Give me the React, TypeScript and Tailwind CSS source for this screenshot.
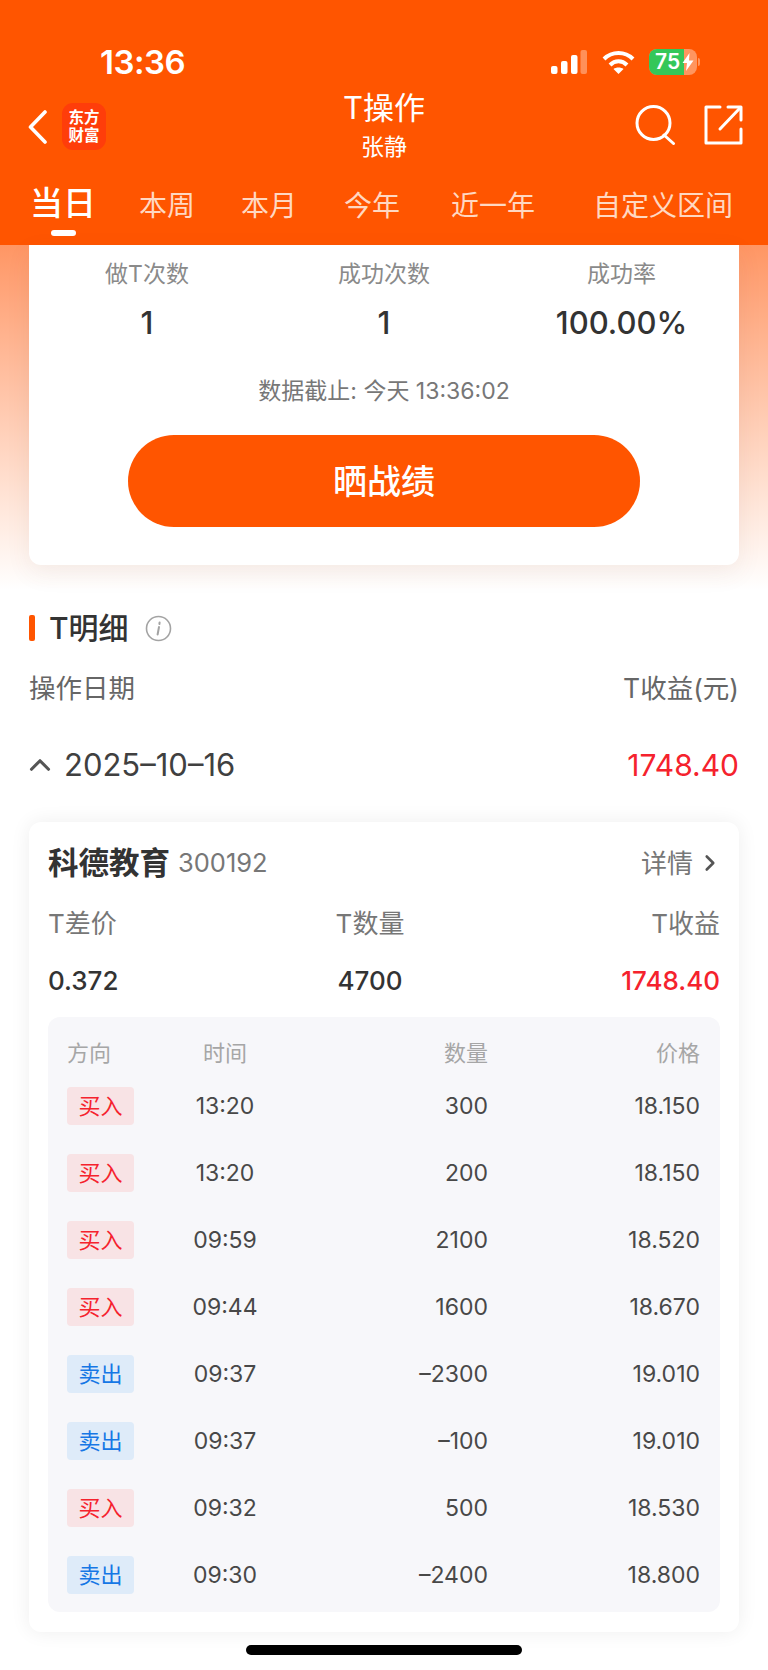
import { ChevronRight, ChevronUp } from 'lucide-react'

const tabs = [
  { label: '本周', className: 'ml-[43px]' },
  { label: '本月', className: 'ml-[46px]' },
  { label: '今年', className: 'ml-[47px]' },
  { label: '近一年', className: 'ml-[51px]' },
  { label: '自定义区间', className: 'ml-[58px]' },
]

const stats = [
  { label: '做T次数', value: '1' },
  { label: '成功次数', value: '1' },
  { label: '成功率', value: '100.00%' },
]

const trades = [
  { side: 'buy', time: '13:20', qty: '300', price: '18.150' },
  { side: 'buy', time: '13:20', qty: '200', price: '18.150' },
  { side: 'buy', time: '09:59', qty: '2100', price: '18.520' },
  { side: 'buy', time: '09:44', qty: '1600', price: '18.670' },
  { side: 'sell', time: '09:37', qty: '-2300', price: '19.010' },
  { side: 'sell', time: '09:37', qty: '-100', price: '19.010' },
  { side: 'buy', time: '09:32', qty: '500', price: '18.530' },
  { side: 'sell', time: '09:30', qty: '-2400', price: '18.800' },
]

function StatusBar() {
  return (
    <div className="flex h-[86px] items-start pl-[100px] pt-[44px] pr-[68px] text-white">
      <span className="text-[33px] leading-[36px] font-semibold tracking-[-0.5px]">13:36</span>
      <div className="ml-auto flex items-center pt-[5px]">
        <svg width="36" height="25" viewBox="0 0 36 25" fill="white">
          <rect x="0" y="16" width="6.5" height="8" rx="2" />
          <rect x="10" y="11" width="6.5" height="13" rx="2" />
          <rect x="20" y="5" width="6.5" height="19" rx="2" />
          <rect x="29.5" y="0" width="6.5" height="24" rx="2" opacity="0.35" />
        </svg>
        <svg className="ml-[15px]" width="33" height="25" viewBox="0 0 33 25" fill="none" stroke="white" strokeWidth="4">
          <path d="M2 9 C10 1 23 1 31 9" />
          <path d="M8 15 C13 10 20 10 25 15" />
          <path d="M16.5 24 L11.5 19 C14 17 19 17 21.5 19 Z" fill="white" stroke="none" />
        </svg>
        <div className="relative ml-[14px] flex h-[26px] w-[48px] overflow-hidden rounded-[8px] bg-[#ff955f]">
          <div className="h-full w-[35px] bg-[#34c759]" />
          <span className="absolute left-[6px] top-0 text-[21px] leading-[26px] font-semibold">75</span>
          <svg className="absolute left-[33px] top-[4px]" width="12" height="18" viewBox="0 0 12 18" fill="white">
            <path d="M7.5 0 L0.5 10 H5 L4 18 L11.5 7.5 H7 Z" />
          </svg>
        </div>
        <div className="ml-[1px] h-[8px] w-[2px] rounded-r-full bg-[#ff955f]" />
      </div>
    </div>
  )
}

function Header() {
  return (
    <header className="h-[245px] bg-[#ff5500] text-white">
      <StatusBar />
      <div className="grid h-[78px] grid-cols-[1fr_auto_1fr] items-center pl-[28px] pr-[28px]">
        <div className="mt-[3px] flex items-center">
          <svg width="19" height="34" viewBox="0 0 19 34" fill="none" stroke="white" strokeWidth="3.6" strokeLinecap="round" strokeLinejoin="round">
            <path d="M17 2 L2.5 17 L17 32" />
          </svg>
          <div className="ml-[15px] flex h-[47px] w-[44px] flex-col items-center justify-center rounded-[11px] bg-[#ff3d0a] text-[15.5px] leading-[18px] font-bold">
            <span>东方</span>
            <span>财富</span>
          </div>
        </div>
        <div className="flex flex-col items-center">
          <span className="h-[34px] text-[31px] leading-[34px]">T操作</span>
          <span className="mt-[10px] h-[24px] text-[23px] leading-[24px]">张静</span>
        </div>
        <div className="mr-[-3px] flex items-center justify-end">
          <svg width="41" height="40" viewBox="0 0 41 40" fill="none" stroke="white" strokeWidth="3" strokeLinecap="round">
            <circle cx="18.5" cy="18" r="16.5" />
            <path d="M29 30 L38.5 38.5" />
          </svg>
          <svg className="ml-[28px]" width="39" height="40" viewBox="0 0 39 40" fill="none" stroke="white" strokeWidth="3" strokeLinecap="round" strokeLinejoin="round">
            <path d="M16 2 H2 V38 H37 V24" />
            <path d="M16 24 L36 3" />
            <path d="M24 2 H37 V15" />
          </svg>
        </div>
      </div>
      <div className="flex items-start pt-[16px] pl-[30px]">
        <div className="flex flex-col items-center">
          <span className="h-[46px] text-[33px] leading-[46px] font-medium">当日</span>
          <span className="mt-[4px] h-[6px] w-[25px] rounded-full bg-white" />
        </div>
        {tabs.map((tab) => (
          <span key={tab.label} className={`${tab.className} mt-[3px] text-[28px] leading-[46px] text-[#ffd8c2]`}>
            {tab.label}
          </span>
        ))}
      </div>
    </header>
  )
}

function Trade({ side, time, qty, price }: { side: string; time: string; qty: string; price: string }) {
  const isBuy = side === 'buy'
  return (
    <div className="grid h-[38px] grid-cols-[103px_110px_208px_212px] items-center text-[23px] text-[#484848]">
      <span
        className={`flex h-[38px] w-[67px] items-center justify-center rounded-[4px] text-[22px] ${
          isBuy ? 'bg-[#f8e3e5] text-[#f5222d]' : 'bg-[#deebf9] text-[#1677e5]'
        }`}
      >
        {isBuy ? '买入' : '卖出'}
      </span>
      <span className="text-center">{time}</span>
      <span className="text-right">{qty.replace('-', '–')}</span>
      <span className="text-right">{price}</span>
    </div>
  )
}

export default function App() {
  return (
    <div className="relative h-[1670px] w-[768px] overflow-hidden bg-white font-[Inter,'Noto_Sans_CJK_SC',sans-serif]">
      <Header />

      <div className="bg-gradient-to-b from-[#ff9664] to-white px-[29px] pb-[25px]">
        <div className="rounded-b-[12px] bg-white pt-[14px] pb-[38px] shadow-[0_8px_24px_rgba(120,80,60,0.08)]">
          <div className="grid grid-cols-[236px_238px_237px]">
            {stats.map((s) => (
              <div key={s.label} className="flex flex-col items-center">
                <span className="h-[30px] text-[23px] leading-[30px] text-[#8a8a8a]">{s.label}</span>
                <span className="mt-[19px] h-[30px] text-[31px] leading-[30px] font-medium text-[#333333]">{s.value}</span>
              </div>
            ))}
          </div>
          <p className="mt-[38px] h-[30px] text-center text-[23px] leading-[30px] text-[#777777]">数据截止: 今天 13:36:02</p>
          <button className="mx-auto mt-[29px] flex h-[92px] w-[512px] items-center justify-center rounded-[46px] bg-[#ff5500] text-[34px] font-medium text-white">
            晒战绩
          </button>
        </div>
      </div>

      <section className="px-[29px]">
        <div className="mt-[23px] flex h-[30px] items-center">
          <span className="h-[26px] w-[6px] rounded-[2px] bg-[#ff5500]" />
          <h2 className="ml-[14px] text-[30px] leading-[30px] font-medium text-[#333333]">T明细</h2>
          <svg className="ml-[16px]" width="27" height="27" viewBox="0 0 27 27" fill="none" stroke="#a3a3a3" strokeWidth="1.6">
            <circle cx="13.5" cy="13.5" r="12" />
            <path d="M14 12 L12.6 19.5 M14.6 7.5 L14.4 9" strokeLinecap="round" strokeWidth="2" />
          </svg>
        </div>

        <div className="mt-[31px] flex h-[30px] items-center justify-between text-[26.5px] text-[#666666]">
          <span>操作日期</span>
          <span>T收益(元)</span>
        </div>

        <div className="mt-[46px] flex h-[30px] items-center">
          <ChevronUp size={34} strokeWidth={2.2} className="-ml-[6px] text-[#555555]" />
          <span className="ml-[7px] text-[31px] text-[#404040]">2025–10–16</span>
          <span className="ml-auto text-[30px] text-[#f5222d]">1748.40</span>
        </div>

        <div className="mt-[42px] rounded-[12px] bg-white px-[19px] pt-[26px] pb-[20px] shadow-[0_0_20px_rgba(0,0,0,0.07)]">
          <div className="flex h-[30px] items-center">
            <span className="text-[30.5px] leading-[30px] font-bold text-[#333333]">科德教育</span>
            <span className="ml-[8px] text-[25.5px] text-[#777777]">300192</span>
            <span className="ml-auto text-[26px] text-[#777777]">详情</span>
            <ChevronRight size={26} strokeWidth={2.4} className="mr-[-3px] ml-[4px] text-[#555555]" />
          </div>

          <div className="mt-[26px] grid h-[30px] grid-cols-[240px_164px_268px] items-center text-[26px] text-[#777777]">
            <span>T差价</span>
            <span className="text-center">T数量</span>
            <span className="text-right">T收益</span>
          </div>

          <div className="mt-[27px] grid h-[30px] grid-cols-[240px_164px_268px] items-center text-[26px] font-medium text-[#333333]">
            <span>0.372</span>
            <span className="text-center">4700</span>
            <span className="text-right text-[#f5222d]">1748.40</span>
          </div>

          <div className="mt-[26px] rounded-[12px] bg-[#f7f7fa] pt-[20px] pr-[20px] pb-[18px] pl-[19px]">
            <div className="grid h-[30px] grid-cols-[103px_110px_208px_212px] items-center text-[22px] text-[#a6a6a6]">
              <span>方向</span>
              <span className="text-center">时间</span>
              <span className="text-right">数量</span>
              <span className="text-right">价格</span>
            </div>
            <div className="mt-[20px] flex flex-col gap-[29px]">
              {trades.map((t, i) => (
                <Trade key={i} {...t} />
              ))}
            </div>
          </div>
        </div>
      </section>

      <div className="mx-auto mt-[13px] h-[10px] w-[276px] rounded-full bg-black" />
    </div>
  )
}
